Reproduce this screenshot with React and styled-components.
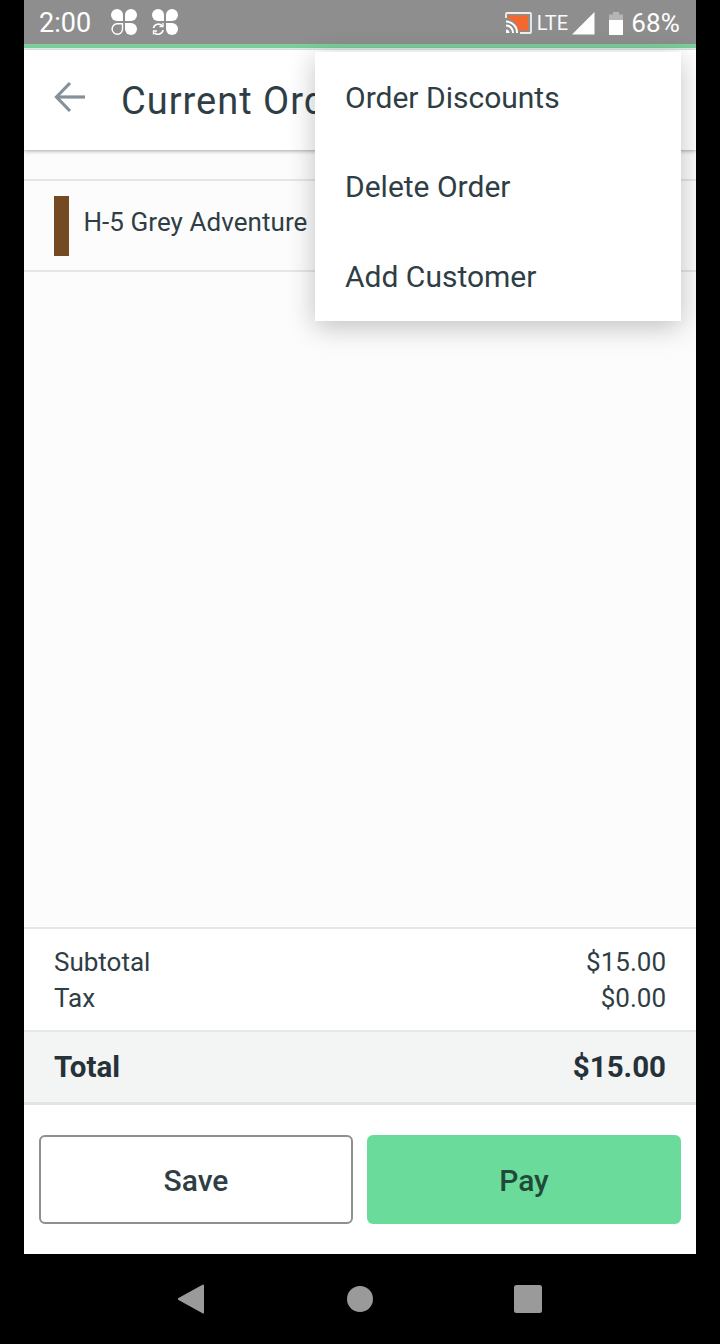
import React from "react";
import styled, { createGlobalStyle } from "styled-components";

const Global = createGlobalStyle`
  html, body { margin: 0; padding: 0; background: #000; }
  * { box-sizing: border-box; }
  body { font-family: Roboto, "Liberation Sans", sans-serif; }
`;

const Page = styled.div`
  width: 720px;
  height: 1344px;
  background: #000;
  display: flex;
  flex-direction: column;
  overflow: hidden;
`;
const Screen = styled.div`
  position: relative;
  width: 672px;
  height: 1254px;
  margin: 0 24px;
  display: flex;
  flex-direction: column;
  background: #fcfcfc;
  overflow: hidden;
`;
const StatusBar = styled.div`
  height: 44px;
  flex: none;
  background: #8e8e8e;
  color: #fff;
  display: flex;
  align-items: center;
  padding: 0 16px 0 15px;
`;
const Clock = styled.span`
  font-size: 27px;
  line-height: 44px;
  width: 72px;
  margin-top: 2px;
`;
const Notifs = styled.div`
  display: flex;
  gap: 15px;
`;
const StatusRight = styled.div`
  margin-left: auto;
  display: flex;
  align-items: center;
  padding-top: 2px;
`;
const Lte = styled.span`
  font-size: 20px;
  margin: -1px 4px 0 5px;
  color: #fafafa;
`;
const Percent = styled.span`
  font-size: 26px;
  margin-left: 8px;
  letter-spacing: 0.2px;
`;
const Accent = styled.div`
  height: 6px;
  flex: none;
  background: linear-gradient(#7ccf9d 0 4px, #e6f4ec 4px 6px);
`;
const AppBar = styled.header`
  height: 100px;
  flex: none;
  background: #fff;
  display: flex;
  align-items: center;
  padding-left: 30px;
  box-shadow: 0 1px 4px rgba(0, 0, 0, 0.35);
  position: relative;
`;
const Back = styled.svg`
  width: 32px;
  height: 32px;
  margin-right: 36px;
  margin-top: -6px;
`;
const Title = styled.h1`
  margin: 2px 0 0 -1px;
  font-size: 38px;
  font-weight: 400;
  letter-spacing: 1px;
  color: #2f3e45;
  white-space: nowrap;
`;
const Content = styled.main`
  flex: 1;
  padding-top: 29px;
`;
const ItemRow = styled.div`
  height: 93px;
  border-top: 2px solid #e6e6e6;
  border-bottom: 2px solid #e6e6e6;
  display: flex;
  align-items: center;
  padding-left: 30px;
  gap: 14.500px;
`;
const Swatch = styled.div`
  width: 15px;
  height: 60px;
  margin-top: 1px;
  background: #744a22;
`;
const ItemName = styled.span`
  font-size: 26px;
  letter-spacing: 0.06px;
  color: #2f3e45;
  white-space: nowrap;
  margin-bottom: 7px;
`;
const Totals = styled.section`
  flex: none;
  height: 103px;
  background: #fff;
  border-top: 2px solid #e6e6e6;
  padding: 15px 30px 0;
  display: flex;
  flex-direction: column;
`;
const Line = styled.div`
  display: flex;
  justify-content: space-between;
  font-size: 26px;
  line-height: 36px;
  color: #2f3e45;
`;
const TotalRow = styled.div`
  flex: none;
  height: 75px;
  background: #f3f5f5;
  border-top: 2px solid #e6e8e8;
  border-bottom: 3px solid #e2e4e4;
  padding: 0 30px;
  display: flex;
  align-items: center;
  justify-content: space-between;
  font-size: 29.500px;
  font-weight: 700;
  color: #263238;
`;
const Actions = styled.div`
  flex: none;
  height: 149px;
  background: #fff;
  display: grid;
  grid-template-columns: 314px 314px;
  gap: 14px;
  padding: 30px 15px;
`;
const Button = styled.button`
  height: 89px;
  border-radius: 6px;
  font: 500 30px Roboto, sans-serif;
  color: ${(p) => (p.$primary ? "#1f4a3a" : "#2f3e45")};
  background: ${(p) => (p.$primary ? "#6bdb9b" : "#fff")};
  border: ${(p) => (p.$primary ? "none" : "2px solid #8f8f8f")};
  padding: 1px 0 0;
`;
const Menu = styled.nav`
  position: absolute;
  left: 291px;
  top: 52px;
  width: 366px;
  height: 269px;
  padding-top: 1px;
  background: #fff;
  box-shadow: 0 6px 26px rgba(0, 0, 0, 0.24);
  display: flex;
  flex-direction: column;
`;
const MenuItem = styled.div`
  flex: 1;
  display: flex;
  align-items: center;
  padding-left: 30px;
  font-size: 30px;
  color: #2f3e45;
`;
const NavBar = styled.div`
  flex: 1;
  display: flex;
  align-items: center;
  justify-content: center;
`;
const NavSlot = styled.svg`
  width: 30px;
  height: 30px;
  margin: 0 ${(p) => p.$right ?? 69}px 0 ${(p) => p.$left ?? 69}px;
`;

const Petals = ({ children }) => (
  <g fill="#fff">
    <path d="M12 6a6 6 0 1 0-6 6h6z" />
    <path d="M14 6a6 6 0 1 1 6 6h-6z" />
    <path d="M14 20a6 6 0 1 0 6-6h-6z" />
    {children}
  </g>
);

const CloverLoop = () => (
  <svg width="26" height="26" viewBox="0 0 26 26">
    <Petals>
      <path d="M11.500 14.800H6a5.200 5.200 0 1 0 5.500 5.200z" fill="none" stroke="#fff" strokeWidth="1.400" />
    </Petals>
  </svg>
);

const CloverSync = () => (
  <svg width="26" height="26" viewBox="0 0 26 26">
    <Petals>
      <g fill="none" stroke="#fff" strokeWidth="1.700">
        <path d="M1.500 19a5 5 0 0 1 8.800-2" />
        <path d="M11 21a5 5 0 0 1-8.500 2.800" />
        <path d="M11 14v3.600H7.500" strokeWidth="1.300" />
        <path d="M1.500 25.500V22H5" strokeWidth="1.300" />
      </g>
    </Petals>
  </svg>
);

const CastIcon = () => (
  <svg width="27" height="22" viewBox="0 0 27 22" style={{ display: "block" }}>
    <path d="M1 6V2a1 1 0 0 1 1-1h23a1 1 0 0 1 1 1v18a1 1 0 0 1-1 1H15" fill="none" stroke="#eee" strokeWidth="1.800" />
    <path d="M3 3.500h20v15H13C12.500 12 9 7.500 3 7z" fill="#f4672f" />
    <path d="M1 9.500a11 11 0 0 1 11 11.500" fill="none" stroke="#fff" strokeWidth="2" />
    <path d="M1 13.500a7 7 0 0 1 7 7.500" fill="none" stroke="#fff" strokeWidth="2" />
    <path d="M1 17.500a3.500 3.500 0 0 1 3.500 3.500H1z" fill="#fff" />
  </svg>
);

const SignalIcon = () => (
  <svg width="23" height="23" viewBox="0 0 23 23" style={{ display: "block" }}>
    <path d="M22.500 0v22.500H0z" fill="#fff" />
  </svg>
);

const BatteryIcon = () => (
  <svg width="14" height="23" viewBox="0 0 14 23" style={{ display: "block", marginLeft: 14 }}>
    <path d="M4 0h6v2.500h4V23H0V2.500h4z" fill="#b5b5b5" />
    <path d="M0 8h14v15H0z" fill="#fff" />
  </svg>
);

export default function App() {
  return (
    <Page>
      <Global />
      <Screen>
        <StatusBar>
          <Clock>2:00</Clock>
          <Notifs>
            <CloverLoop />
            <CloverSync />
          </Notifs>
          <StatusRight>
            <CastIcon />
            <Lte>LTE</Lte>
            <SignalIcon />
            <BatteryIcon />
            <Percent>68%</Percent>
          </StatusRight>
        </StatusBar>
        <Accent />
        <AppBar>
          <Back viewBox="0 0 32 32" fill="none" stroke="#84909a" strokeWidth="3.200">
            <path d="M31 16H3" />
            <path d="M16 2 2.500 16 16 30" />
          </Back>
          <Title>Current Order</Title>
        </AppBar>
        <Content>
          <ItemRow>
            <Swatch />
            <ItemName>H-5 Grey Adventure</ItemName>
          </ItemRow>
        </Content>
        <Totals>
          <Line>
            <span>Subtotal</span>
            <span>$15.00</span>
          </Line>
          <Line>
            <span>Tax</span>
            <span>$0.00</span>
          </Line>
        </Totals>
        <TotalRow>
          <span>Total</span>
          <span>$15.00</span>
        </TotalRow>
        <Actions>
          <Button>Save</Button>
          <Button $primary>Pay</Button>
        </Actions>
        <Menu>
          <MenuItem>Order Discounts</MenuItem>
          <MenuItem>Delete Order</MenuItem>
          <MenuItem>Add Customer</MenuItem>
        </Menu>
      </Screen>
      <NavBar>
        <NavSlot viewBox="0 0 30 30" $left={68} $right={70}>
          <path d="M28 1.500v27a1 1 0 0 1-1.500.8L2.500 16a1.200 1.200 0 0 1 0-2L26.500.700A1 1 0 0 1 28 1.500z" fill="#9a9a9a" />
        </NavSlot>
        <NavSlot viewBox="0 0 30 30">
          <circle cx="15" cy="15" r="13" fill="#9a9a9a" />
        </NavSlot>
        <NavSlot viewBox="0 0 30 30">
          <rect x="1" y="1" width="28" height="28" rx="2.500" fill="#9a9a9a" />
        </NavSlot>
      </NavBar>
    </Page>
  );
}
